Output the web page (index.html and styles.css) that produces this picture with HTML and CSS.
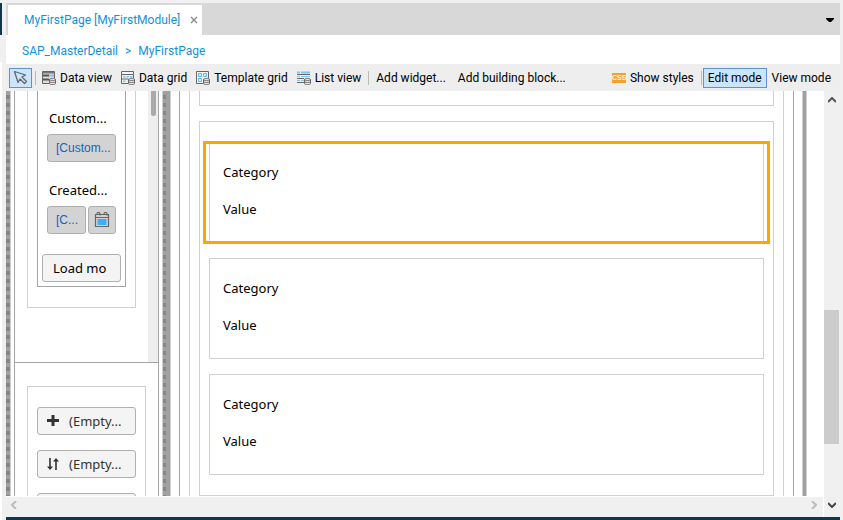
FILE: index.html
```
<!DOCTYPE html>
<html lang="en">
<head>
<meta charset="utf-8">
<title>MyFirstPage [MyFirstModule]</title>
<link rel="stylesheet" href="styles.css">
</head>
<body>
<div class="rail"></div>
<div class="window">
  <header class="tabs">
    <div class="tab"><a href="#">MyFirstPage [MyFirstModule]</a>
      <button class="plain" aria-label="Close tab"><svg width="8" height="8" viewBox="0 0 8 8"><path d="M1 1l6 6M7 1L1 7" stroke="#888" stroke-width="1.4" fill="none"/></svg></button>
    </div>
    <button class="plain tab-list" aria-label="Open tabs"><svg width="8" height="4" viewBox="0 0 8 4"><path d="M0 0h8v1L5 4H3L0 1z" fill="#000"/></svg></button>
  </header>
  <nav class="crumbs"><a href="#">SAP_MasterDetail</a><span>&gt;</span><a href="#">MyFirstPage</a></nav>
  <div class="toolbar">
    <button class="tool pointer active" aria-label="Select"><svg width="15" height="15" viewBox="0 0 15 15"><path d="M1.500 1.500L5 12.500l2-3.500 4.500 4.500 2-2L9 7l3.500-2z" fill="none" stroke="#666" stroke-width="1.300" stroke-linejoin="round"/></svg></button>
    <span class="sep"></span>
    <button class="tool"><svg width="14" height="14" viewBox="0 0 14 14"><path d="M.5.500h12v12H.500z" fill="#ddd" stroke="#666"/><path d="M1 1h11v1.500H1z" fill="#777"/><path d="M1 4.500h6M1 8.500h6" stroke="#555" stroke-width="2"/><path d="M7 4.500h5" stroke="#7cc5f5" stroke-width="2"/><use href="#db"/></svg>Data view</button>
    <button class="tool"><svg width="14" height="14" viewBox="0 0 14 14"><path d="M.5.500h12v3H.500zM.5 3.500v9H8M.5 8h12M12.500 3.500V8" fill="#f4f4f4" stroke="#666"/><path d="M2 5.800h2.500M5.500 5.800H8M9 5.800h2.500M2 10.200h2.500" stroke="#7cc5f5" stroke-width="1.500"/><use href="#db"/></svg>Data grid</button>
    <button class="tool"><svg width="14" height="14" viewBox="0 0 14 14"><path d="M.5.500h12v12H.500z" fill="#f4f4f4" stroke="#666"/><path d="M2.500 2.500h3v3h-3zM7.500 2.500h3v3h-3zM2.500 7.500h3v3h-3z" fill="#d9effc" stroke="#62b6ee"/><use href="#db"/></svg>Template grid</button>
    <button class="tool"><svg width="14" height="14" viewBox="0 0 14 14"><path d="M0 1.500h3M4 1.500h9" stroke="#7cc5f5" stroke-width="2"/><path d="M0 3.500h13M0 7.500h13M0 11.500h8" stroke="#666"/><path d="M0 5.500h3M4 5.500h9M0 9.500h3M4 9.500h4" stroke="#7cc5f5"/><use href="#db"/></svg>List view</button>
    <span class="sep"></span>
    <button class="tool text">Add widget...</button>
    <button class="tool text">Add building block...</button>
    <span class="spacer"></span>
    <button class="tool"><span class="css">CSS</span>Show styles</button>
    <span class="sep"></span>
    <button class="tool mode active">Edit mode</button>
    <button class="tool mode">View mode</button>
  </div>
  <main class="workspace">
    <div class="canvas">
      <div class="stripe"></div>
      <aside class="side">
        <section class="upper">
          <div class="outer-box"><div class="form-box">
            <div class="field"><label for="customer">Custom...</label><div class="row"><input id="customer" class="wide" value="[Custom..."></div></div>
            <div class="field"><label for="created">Created...</label><div class="row"><input id="created" class="narrow" value="[C..."><button class="date" aria-label="Pick date"><svg width="16" height="16" viewBox="0 0 16 16"><path d="M1.500 2.500h13v12h-13zM1.500 5.500h13" fill="none" stroke="#666" stroke-width="1.200"/><path d="M3 2a1.300 1.300 0 0 1 3 0v1.500M10 2a1.300 1.300 0 0 1 3 0v1.500" fill="none" stroke="#666" stroke-width="1.200"/><path d="M3.500 7h9v6h-9z" fill="#42adf7"/></svg></button></div></div>
            <button class="btn load">Load mo</button>
          </div></div>
          <div class="mini-scroll"><div></div></div>
        </section>
        <section class="lower"><div class="actions">
          <button class="btn"><svg width="12" height="12" viewBox="0 0 12 12"><path d="M6 0v11M0 5.500h12" stroke="#333" stroke-width="3" fill="none"/></svg>(Empty...</button>
          <button class="btn"><svg width="12" height="12" viewBox="0 0 12 12"><path d="M3 0v9M9 3v9" stroke="#333" stroke-width="1.600"/><path d="M0 8.500h6L3 12zM6 3.500h6L9 0z" fill="#333"/></svg>(Empty...</button>
          <button class="btn" aria-label="More"></button>
        </div></section>
      </aside>
      <div class="stripe thick"></div>
      <section class="detail"><div class="inner">
        <div class="block previous"></div>
        <div class="block list">
          <article class="item selected"><p>Category</p><p>Value</p></article>
          <article class="item"><p>Category</p><p>Value</p></article>
          <article class="item"><p>Category</p><p>Value</p></article>
        </div>
      </div></section>
      <div class="edge"></div>
    </div>
    <div class="vscroll">
      <svg width="8" height="6" viewBox="0 0 8 6"><path d="M0 5l4-4 4 4" fill="none" stroke="#555" stroke-width="2"/></svg>
      <div class="track"><div class="thumb"></div></div>
    </div>
    <div class="hscroll">
      <svg width="6" height="8" viewBox="0 0 6 8"><path d="M5 0L1 4l4 4" fill="none" stroke="#bbb" stroke-width="2"/></svg>
      <svg width="6" height="8" viewBox="0 0 6 8"><path d="M1 0l4 4-4 4" fill="none" stroke="#bbb" stroke-width="2"/></svg>
    </div>
    <div class="corner"><svg width="8" height="6" viewBox="0 0 8 6"><path d="M0 1l4 4 4-4" fill="none" stroke="#444" stroke-width="2"/></svg></div>
  </main>
  <footer class="bottom"></footer>
</div>
<svg class="defs" width="0" height="0"><g id="db"><path d="M7 7h7v7H7z" fill="#eee"/><path d="M7.500 8.500v4c0 1.500 6 1.500 6 0v-4c0-1.500-6-1.500-6 0zM7.500 8.500c0 1.300 6 1.300 6 0M7.500 10.500c0 1.300 6 1.300 6 0" fill="#e4e4e4" stroke="#666"/></g></svg>
</body>
</html>
```
FILE: styles.css
```
* { box-sizing: border-box; }
body {
  margin: 0;
  height: 100vh;
  display: flex;
  overflow: hidden;
  background: #f0f0f0;
  color: #000;
  font: 12px/16px Roboto, sans-serif;
}
button, input { font: inherit; color: inherit; margin: 0; }
a { color: #0f93d8; text-decoration: none; }
svg { flex: none; display: block; }
.defs { position: absolute; }
.rail {
  width: 2px;
  margin: 3px 4px 0 0;
  background: linear-gradient(#0c3850 32px, #f0f0f0 32px, #f0f0f0 59px, #fff 59px);
}
.window { flex: 1; min-width: 0; margin-right: 3px; padding-top: 3px; display: flex; flex-direction: column; }
.plain { border: 0; padding: 0; background: none; }

.tabs { height: 32px; flex: none; background: #d8d8d8; display: flex; justify-content: space-between; align-items: center; padding: 2px 6px 0 2px; }
.tab { background: #fff; height: 30px; padding: 0 4px 0 16px; display: flex; align-items: center; gap: 10px; }
.crumbs { height: 29px; flex: none; background: #fff; display: flex; align-items: center; gap: 7px; padding: 2px 16px 0; color: #0f93d8; }

.toolbar { height: 27px; flex: none; background: #eee; display: flex; align-items: center; padding: 0 4px 0 3px; white-space: nowrap; }
.tool { display: flex; align-items: center; gap: 4px; height: 20px; border: 1px solid transparent; background: none; padding: 0 3px 0 4px; }
.tool.pointer { width: 23px; padding: 0 3px; }
.tool.text { padding: 0 5px; }
.tool.mode { padding: 0 4px; }
.tool.active { border-color: #5c93d3; background: #cae5fc; }
.sep { width: 1px; height: 14px; background: #bbb; margin: 0 1px 0 3px; }
.spacer { flex: 1; }
.css { background: #f7a12c; color: #fff; font: bold 7px/10px "Liberation Sans", sans-serif; width: 14px; text-align: center; }

.workspace { flex: 1; min-height: 0; display: grid; grid-template: minmax(0, 1fr) 20px / minmax(0, 1fr) 16px; background: #fff; }
.canvas { display: flex; padding-right: 17px; overflow: hidden; margin-bottom: 1px; }
.stripe { width: 5px; flex: none; border: solid #d0d0d0; border-width: 0 1px 0 0; background: repeating-linear-gradient(#a0a0a0 0 4px, #858585 4px 8px); }
.stripe.thick { width: 9px; margin: 0 8px 0 3px; border-width: 0 1px; background: linear-gradient(#a0a0a0, #a0a0a0) right / 4px 100% no-repeat, repeating-linear-gradient(#a0a0a0 0 4px, #858585 4px 8px); }
.side { width: 145px; flex: none; margin-left: 3px; border: solid #a5a5a5; border-width: 0 1px; display: flex; flex-direction: column; font: 13px/18px "Noto Sans", sans-serif; }
.upper { height: 272px; flex: none; display: flex; justify-content: space-between; align-items: flex-start; padding-left: 12px; border-bottom: 1px solid #a5a5a5; }
.outer-box { width: 109px; padding: 0 9px 20px; border: 1px solid #d0d0d0; border-top: 0; }
.form-box { border: 1px solid #a5a5a5; border-top: 0; padding: 18px 4px 4px; }
.field { height: 72px; padding-left: 5px; }
.field label { display: block; height: 25px; padding-left: 2px; white-space: nowrap; }
.row { display: flex; gap: 2px; }
.row input, .date { height: 28px; border: 1px solid #b0b0b0; border-radius: 3px; background: #d3d3d3; color: #1464c0; }
.row input { padding: 0 4px 0 8px; font: 12px/16px "Liberation Sans", sans-serif; }
.row .wide { width: 69px; }
.row .narrow { width: 39px; }
.date { width: 28px; padding: 0 5px; }
.btn { display: flex; align-items: center; gap: 10px; width: 99px; height: 28px; border: 1px solid #b0b0b0; border-radius: 3px; background: #f4f4f4; color: #333; padding: 0 9px; white-space: nowrap; }
.btn.load { width: 79px; margin-top: 1px; padding: 0 10px; color: #000; }
.mini-scroll { width: 10px; align-self: stretch; background: #eee; padding: 0 2px 0 3px; }
.mini-scroll div { height: 25px; background: #aaa; border-radius: 0 0 3px 3px; }
.lower { flex: 1; min-height: 0; overflow: hidden; padding: 23px 12px 0; }
.actions { width: 119px; border: 1px solid #d0d0d0; padding: 20px 9px; display: flex; flex-direction: column; gap: 15px; }

.detail { flex: 1; min-width: 0; border: solid #a5a5a5; border-width: 0 1px; padding: 0 9px; font: 13px/18px "Noto Sans", sans-serif; }
.inner { border: solid #d0d0d0; border-width: 0 1px; padding: 0 9px; height: 100%; }
.block { border: 1px solid #d0d0d0; }
.previous { height: 15px; border-top: 0; }
.list { margin-top: 15px; padding: 20px 9px; display: flex; flex-direction: column; gap: 15px; }
.item { position: relative; border: 1px solid #d0d0d0; height: 101px; padding: 20px 13px; }
.item p { margin: 0 0 19px; }
.item.selected::after { content: ""; position: absolute; inset: -2px -7px; border: 3px solid #ffa500; }
.edge { width: 5px; flex: none; margin-left: 8px; border: solid #d0d0d0; border-width: 0 1px; background: #a0a0a0; }

.vscroll { background: #f0f0f0; display: flex; flex-direction: column; align-items: center; padding-top: 6px; }
.track { flex: 1; align-self: stretch; display: grid; grid-template-rows: 207fr 134fr 53fr; padding-right: 1px; }
.thumb { grid-row: 2; background: #ccc; }
.hscroll { background: #f0f0f0; display: flex; justify-content: space-between; align-items: flex-start; padding: 4px 6px 0 5px; margin-right: 1px; }
.corner { background: #f0f0f0; display: flex; justify-content: center; padding-top: 5px; }
.bottom { height: 3px; flex: none; background: #0c3850; }
```
